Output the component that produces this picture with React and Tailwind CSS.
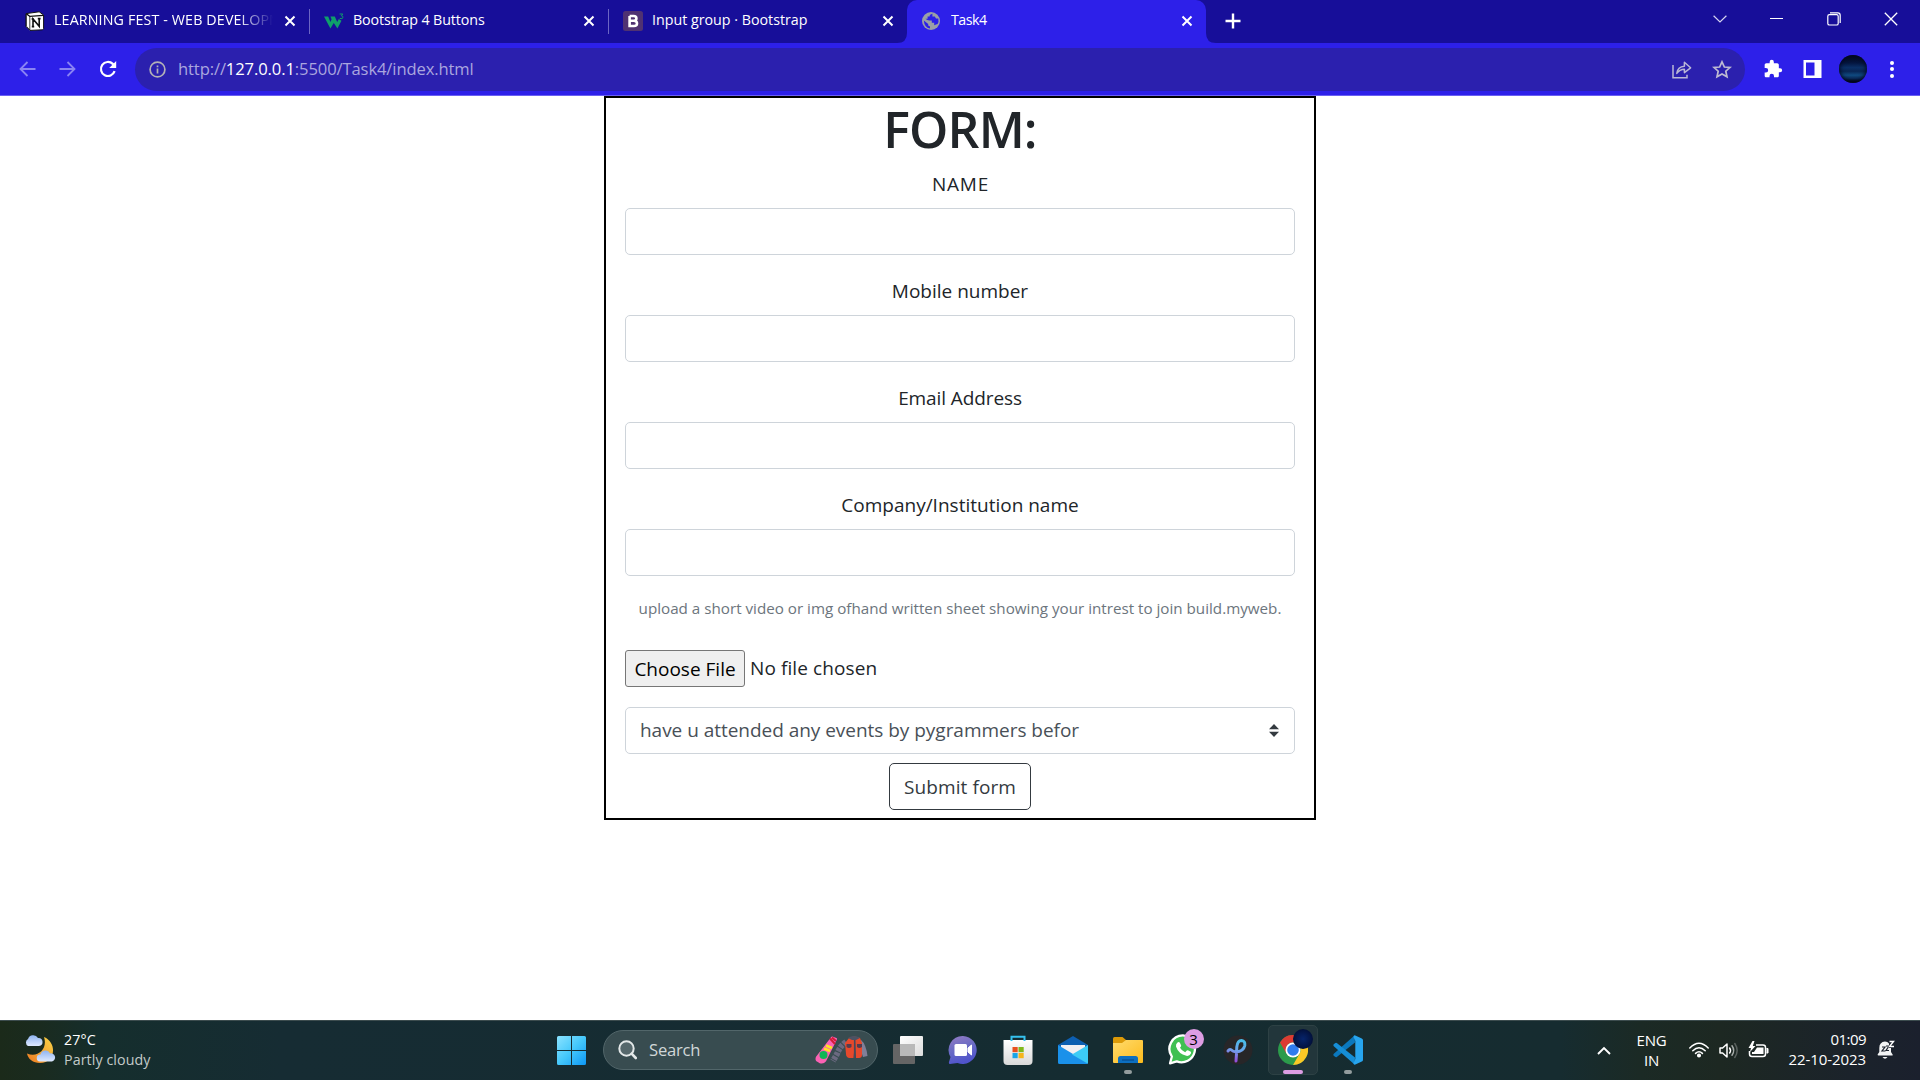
import React from "react";

const NotionIcon = () => (
  <svg width="20" height="20" viewBox="0 0 20 20">
    <path d="M1.2 2.6 L14.2 0.8 L18.6 4 V17.8 L17.6 18.8 L5 19.4 L1 15.4 V3.6 Z" fill="#fff" stroke="#111" strokeWidth="1" strokeLinejoin="round" />
    <path d="M1.4 2.8 L4.8 5.4 V19 L1.4 15.2 Z" fill="#fff" stroke="#111" strokeWidth=".8" />
    <path d="M1.4 2.8 L4.8 5.4 L18.4 4.4" fill="none" stroke="#111" strokeWidth="1.3" />
    <path d="M8 15.5 V8 L14.2 15.3 V7.4 M6.6 8 H9 M12.8 7.6 H15.6 M6.8 15.6 H9.2" fill="none" stroke="#111" strokeWidth="1.6" />
  </svg>
);

const W3Icon = () => (
  <svg width="20" height="20" viewBox="0 0 20 20">
    <path d="M0 5.5 H4.200 L6.400 11 L7.600 8.200 L6.400 5.500 H10.800 L13.200 11 L14.800 8 L17.500 9.800 L13.400 17.500 L9.800 12 L6.400 17.500 Z" fill="#0f9f6a" />
    <path d="M15.6 3 H18.8 L17.4 4.8 Q19.3 5 19 6.6 Q18.4 8.2 15.8 7.4" fill="none" stroke="#0f9f6a" strokeWidth="1" />
  </svg>
);

const BootstrapIcon = () => (
  <svg width="20" height="20" viewBox="0 0 20 20">
    <rect width="20" height="20" rx="2.5" fill="#4f3272" />
    <path d="M6.6 5 H10.6 Q13.4 5 13.4 7.4 Q13.4 9.6 10.8 9.8 H6.6 M6.6 9.8 H11 Q14 10 14 12.5 Q14 15 11 15 H6.6 V5" fill="none" stroke="#fff" strokeWidth="2.6" />
  </svg>
);

const GlobeIcon = () => (
  <svg width="20" height="20" viewBox="0 0 20 20">
    <circle cx="9" cy="10" r="9" fill="#9aa0a6" />
    <path d="M10.4 2.8 Q7.400 3.4 7.600 5.6 H5.600 V7.8 H3.400 Q5 9.4 7.600 9.6 H9.800 V11.8 H12.2 V14.2 Q14.2 13.6 15.6 13 Q17 10.8 16.3 7.4 L14 7.6 L12.8 5.6 H10.4 Z M1.800 9.4 L6.200 13 V14.6 L8 15.4 V17.4 Q2.400 16.6 1.800 9.4 Z" fill="#2c20e8" />
  </svg>
);

const TabClose = () => (
  <svg width="12" height="12" viewBox="0 0 12 12" className="shrink-0">
    <path d="M1.5 1.5 L10.5 10.5 M10.5 1.5 L1.5 10.5" stroke="#fff" strokeWidth="2" />
  </svg>
);

function Tab({ icon, children, active, spacing, divider }) {
  return (
    <div className={"relative flex h-[43px] w-[299px] shrink-0 items-center pl-[15px] pr-[13px] pb-[2px] " + (active ? "rounded-t-[10px] bg-[#2d20e9]" : "")}>
      {active && (
        <>
          <svg className="absolute bottom-0 -left-[10px]" width="10" height="10"><path d="M0 10 Q10 10 10 0 V10 Z" fill="#2d20e9" /></svg>
          <svg className="absolute bottom-0 -right-[10px]" width="10" height="10"><path d="M10 10 Q0 10 0 0 V10 Z" fill="#2d20e9" /></svg>
        </>
      )}
      <span className="mr-[9px] shrink-0">{icon}</span>
      <span className={"flex-1 overflow-hidden whitespace-nowrap pb-px text-[14.25px] leading-5 text-white " + spacing}>{children}</span>
      <TabClose />
      {divider && <span className="absolute right-[-1px] top-[9px] h-[25px] w-px bg-[#6c66c4]" />}
    </div>
  );
}

function TabStrip() {
  return (
    <div className="flex h-[43px] bg-[#170e99] pl-[10px]">
      <Tab icon={<NotionIcon />} divider spacing="tracking-[0.14px] mr-[11px] [mask-image:linear-gradient(90deg,#000_84%,transparent)]">LEARNING FEST - WEB DEVELOPMENT</Tab>
      <Tab icon={<W3Icon />} divider spacing="tracking-[-0.1px]">Bootstrap 4 Buttons</Tab>
      <Tab icon={<BootstrapIcon />} spacing="tracking-[0px]">Input group · Bootstrap</Tab>
      <Tab icon={<GlobeIcon />} active spacing="tracking-[-0.5px]">Task4</Tab>
      <div className="flex w-[53px] items-center justify-center pb-px">
        <svg width="16" height="16" viewBox="0 0 16 16"><path d="M8 .5 V15.5 M.5 8 H15.5" stroke="#fff" strokeWidth="2.4" /></svg>
      </div>
      <div className="ml-auto flex h-[37px]">
        <div className="flex w-[57px] items-center justify-center"><svg width="14" height="8" viewBox="0 0 14 8"><path d="M.6 .8 L7 7 L13.4 .8" fill="none" stroke="#d6d4f0" strokeWidth="1.2" /></svg></div>
        <div className="flex w-[57px] items-center justify-center"><span className="h-px w-[13px] bg-white" /></div>
        <div className="flex w-[57px] items-center justify-center">
          <svg width="14" height="14" viewBox="0 0 14 14" fill="none" stroke="#fff" strokeWidth="1.2"><rect x=".8" y="2.6" width="10.4" height="10.4" rx="1.6" /><path d="M3 .8 H10.8 Q13.2 .8 13.2 3.4 V11" /></svg>
        </div>
        <div className="flex w-[58px] items-center justify-center"><svg width="14" height="14" viewBox="0 0 14 14"><path d="M.8 .8 L13.2 13.2 M13.2 .8 L.8 13.2" stroke="#fff" strokeWidth="1.3" /></svg></div>
      </div>
    </div>
  );
}

function Toolbar() {
  return (
    <div className="flex h-[53px] items-center border-b border-[#6a60f2] bg-[#2d20e9] pl-[7px]">
      <div className="flex w-10 justify-center">
        <svg width="17" height="16" viewBox="0 0 17 16"><path d="M16.5 8 H1.5 M8.5 1 L1.5 8 L8.5 15" fill="none" stroke="#8a84f3" strokeWidth="1.8" /></svg>
      </div>
      <div className="flex w-10 justify-center">
        <svg width="17" height="16" viewBox="0 0 17 16"><path d="M.5 8 H15.5 M8.5 1 L15.5 8 L8.5 15" fill="none" stroke="#8a84f3" strokeWidth="1.8" /></svg>
      </div>
      <div className="flex w-[42px] justify-center">
        <svg width="18" height="18" viewBox="0 0 18 18"><path d="M15.6 11.2 A7 7 0 1 1 13.8 3.9 L15.6 5.8" fill="none" stroke="#fff" strokeWidth="2.2" /><path d="M17.2 1 V8 H10.2 Z" fill="#fff" /></svg>
      </div>
      <div className="ml-[6px] flex h-[43px] w-[1610px] items-center rounded-full bg-[#2b20ae] pl-[14px] pr-[13px]">
        <svg width="17" height="17" viewBox="0 0 17 17" fill="none" stroke="#b3b1b7" strokeWidth="1.7"><circle cx="8.5" cy="8.5" r="7.4" /><path d="M8.5 7.6 V12.6 M8.5 4.4 V6.2" /></svg>
        <span className="ml-[12px] text-[16.6px] leading-6 tracking-[-0.12px] text-[#aaa6df]">http://<span className="text-white">127.0.0.1</span>:5500/Task4/index.html</span>
        <svg className="ml-auto" width="20" height="19" viewBox="0 0 20 19" fill="none" stroke="#bab7d6" strokeWidth="1.5"><path d="M1 5 V17.8 H15 V14.8" /><path d="M4.8 13.4 Q5.6 6.6 12.4 6.2 V2.2 L18.6 7.8 L12.4 12.6 V9.2 Q7.6 9.4 4.8 13.4 Z" strokeLinejoin="round" /></svg>
        <svg className="ml-5" width="20" height="19" viewBox="0 0 20 19" fill="none" stroke="#bebbd2" strokeWidth="1.7"><path d="M10 1.8 L12.4 7 L18 7.5 L13.8 11.2 L15 16.8 L10 13.9 L5 16.8 L6.2 11.2 L2 7.5 L7.6 7 Z" /></svg>
      </div>
      <div className="ml-[18px] flex h-[43px] items-center">
        <svg width="20" height="20" viewBox="0 0 24 24" fill="#fff"><path d="M20.5 11H19V7c0-1.100-.9-2-2-2h-4V3.500a2.500 2.500 0 0 0-5 0V5H4c-1.100 0-2 .9-2 2v3.800h1.500a2.700 2.700 0 0 1 0 5.400H2V20c0 1.100.9 2 2 2h3.800v-1.500a2.700 2.700 0 0 1 5.400 0V22H17c1.100 0 2-.9 2-2v-4h1.500a2.500 2.500 0 0 0 0-5z" /></svg>
        <svg className="ml-5" width="19" height="18" viewBox="0 0 19 18"><path fillRule="evenodd" fill="#fff" d="M.5 0 H18.500 V18 H.5 Z M3 2.500 V15.500 H11.500 V2.500 Z" /></svg>
        <span className="ml-[17px] size-7 rounded-full bg-[linear-gradient(180deg,#020718_0%,#04153f_28%,#0a2f66_45%,#082554_58%,#104a80_72%,#0a2a58_84%,#010414_94%)] shadow-[inset_0_0_4px_1px_#020824]" />
        <span className="ml-[23px] flex w-[5px] flex-col gap-[2.5px]">
          <i className="size-1 rounded-full bg-white" /><i className="size-1 rounded-full bg-white" /><i className="size-1 rounded-full bg-white" />
        </span>
      </div>
    </div>
  );
}

function Field({ label, spacing }) {
  return (
    <div className="mb-5">
      <label className={"mb-[9px] block pt-px text-center leading-[30px] " + spacing}>{label}</label>
      <input className="block h-[47px] w-full rounded-[5px] border border-[#ced4da] bg-white px-4" />
    </div>
  );
}

function Form() {
  return (
    <div className="h-[924px] bg-white text-[19px] text-[#212529]">
      <form className="mx-auto h-[724px] w-[712px] border-2 border-black px-[19px]">
        <h1 className="mb-[10px] mt-0 pt-0.5 text-center text-[50px] font-semibold leading-[58px] tracking-[-0.87px]">FORM:</h1>
        <Field label="NAME" spacing="tracking-[0.8px] pl-px" />
        <Field label="Mobile number" spacing="tracking-[0px]" />
        <Field label="Email Address" spacing="tracking-[-0.1px]" />
        <Field label="Company/Institution name" spacing="tracking-[0px]" />
        <p className="whitespace-nowrap text-center text-[15.2px] leading-6 text-[#6c757d]">upload a short video or img ofhand written sheet showing your intrest to join build.myweb.</p>
        <div className="mt-[30px] flex h-[37px] items-center">
          <button type="button" className="h-[37px] w-[120px] whitespace-nowrap rounded-[3px] border border-[#767676] bg-[#efefef] text-[19px] leading-[30px] text-black">Choose File</button>
          <span className="ml-[5px] tracking-[0.1px]">No file chosen</span>
        </div>
        <div className="mt-5 flex h-[47px] items-center justify-between rounded-[5px] border border-[#ced4da] pl-[14px] pr-[15px] text-[#495057]">
          <span className="tracking-[-0.03px]">have u attended any events by pygrammers befor</span>
          <svg width="10" height="13" viewBox="0 0 4 5" preserveAspectRatio="none"><path fill="#343a40" d="M2 0L0 2h4zm0 5L0 3h4z" /></svg>
        </div>
        <button type="button" className="mx-auto mt-[9px] block h-[47px] w-[142px] whitespace-nowrap rounded-[5px] border border-[#343a40] text-[19px] leading-[30px] tracking-[0.1px] text-[#343a40]">Submit form</button>
      </form>
    </div>
  );
}

const WeatherIcon = () => (
  <svg width="32" height="32" viewBox="0 0 32 32">
    <defs>
      <linearGradient id="moon" x1="1" y1="0" x2="0" y2="1"><stop offset="0" stopColor="#f9d548" /><stop offset="1" stopColor="#ee7a22" /></linearGradient>
      <linearGradient id="cloud" x1="0" y1="0" x2="0" y2="1"><stop offset="0" stopColor="#8fb3f0" /><stop offset="1" stopColor="#dfeaff" /></linearGradient>
    </defs>
    <path d="M20 3 C34 9 31 29 16 29 C9 29 4 25 3 19.500 C14 24 24 15 20 3 Z" fill="url(#moon)" />
    <path d="M4 12 A4 4 0 0 1 4 5 A5.500 5.500 0 0 1 14 4 A4 4 0 0 1 15 12 Z" fill="url(#cloud)" />
    <path d="M16 27.500 A3.500 3.500 0 0 1 16.500 20.500 A5 5 0 0 1 26 19.500 A4 4 0 0 1 28 27.500 Z" fill="url(#cloud)" />
  </svg>
);

const StartIcon = () => (
  <svg width="29" height="29" viewBox="0 0 29 29">
    <defs><linearGradient id="win" x1="0" y1="0" x2="1" y2="1"><stop offset="0" stopColor="#8be3ff" /><stop offset=".5" stopColor="#45c8fb" /><stop offset="1" stopColor="#0d97f5" /></linearGradient></defs>
    <path fill="url(#win)" d="M1.500 0 H14 V14 H0 V1.500 Q0 0 1.500 0 Z M15 0 H27.500 Q29 0 29 1.500 V14 H15 Z M0 15 H14 V29 H1.500 Q0 29 0 27.500 Z M15 15 H29 V27.500 Q29 29 27.500 29 H15 Z" />
  </svg>
);

const SearchArt = () => (
  <svg width="54" height="30" viewBox="0 0 54 30">
    <path d="M17 2.500 L21 4 L10 26 Q8 28.500 4.500 27 L2 25.500 Q1 24 2 22 Z" fill="#fb62b4" stroke="#fb62b4" strokeWidth="2" strokeLinejoin="round" />
    <path d="M15 3.500 L20 9 M17 2.500 L21 6" stroke="#d41c38" strokeWidth="2" />
    <path d="M11 10.500 L17 13 M9 13.500 L15 16" stroke="#ffe51f" strokeWidth="2.500" />
    <circle cx="8.500" cy="20" r="4" fill="#0eb655" />
    <path d="M31 7 Q25 11 22 19 L18 26" fill="none" stroke="#6b6980" strokeWidth="6" strokeDasharray="3.500 1" />
    <path d="M46 5 Q51 9 52.500 21 L48 22 L44 9 Z" fill="#817f98" />
    <path d="M34 3 Q39 0 45 3 L47 8 V20 Q47 23 44 23 H41 L40 6 L38.500 23 H34 Q31 22 31 19 L30 8 Z" fill="#e6492c" />
    <path d="M33 3 Q39 -1 45 3 L41 5 H37 Z" fill="#4c5263" />
    <path d="M31.500 9 H36.500 V12 Q34 14 31.500 12 Z M42 9 H47 V12 Q44 14 42 12 Z" fill="#563b4d" />
    <path d="M39.700 5 V23" stroke="#48495b" strokeWidth="1.600" />
  </svg>
);

const TaskViewIcon = () => (
  <svg width="30" height="30" viewBox="0 0 30 30">
    <defs><linearGradient id="tv" x1="0" y1="0" x2="1" y2="1"><stop offset="0" stopColor="#fff" /><stop offset="1" stopColor="#dcdcdc" /></linearGradient></defs>
    <rect x="0" y="9" width="22" height="20" rx="1" fill="#656565" />
    <rect x="7" y="1" width="23" height="20" rx="1" fill="url(#tv)" />
    <rect x="7" y="9" width="15" height="12" fill="#b9b9b9" />
  </svg>
);

const ChatIcon = () => (
  <svg width="30" height="30" viewBox="0 0 30 30">
    <defs><linearGradient id="chat" x1="0" y1="0" x2=".3" y2="1"><stop offset="0" stopColor="#947cc4" /><stop offset=".5" stopColor="#6b6cc4" /><stop offset="1" stopColor="#5054cc" /></linearGradient></defs>
    <path d="M15 1 A14 14 0 1 1 9.500 28 L2 29 Q.5 29 1 27 L2.500 22 A14 14 0 0 1 15 1 Z" fill="url(#chat)" />
    <rect x="6.500" y="9" width="12.500" height="12" rx="1.500" fill="#fff" />
    <path d="M20 13 L23.500 10 V20 L20 17 Z" fill="#fff" stroke="#fff" strokeLinejoin="round" />
  </svg>
);

const StoreIcon = () => (
  <svg width="30" height="30" viewBox="0 0 30 30">
    <defs><linearGradient id="store" x1="0" y1="0" x2="0" y2="1"><stop offset="0" stopColor="#fff" /><stop offset="1" stopColor="#d9d9d9" /></linearGradient></defs>
    <path d="M.5 5 H29.500 V26 Q29.500 30 25.500 30 H4.500 Q.5 30 .5 26 Z" fill="url(#store)" />
    <path d="M8.500 6 V1.800 H21.500 V6" fill="none" stroke="#35c1ee" strokeWidth="2" />
    <rect x="9.500" y="12" width="5.200" height="5.200" fill="#e8501f" /><rect x="15.500" y="12" width="5.200" height="5.200" fill="#7fb81a" />
    <rect x="9.500" y="18" width="5.200" height="5.200" fill="#1aa5e8" /><rect x="15.500" y="18" width="5.200" height="5.200" fill="#f5b51a" />
  </svg>
);

const MailIcon = () => (
  <svg width="30" height="30" viewBox="0 0 30 30">
    <path d="M0 10 L15 1 L30 10 V20 H0 Z" fill="#0d5fb1" />
    <path d="M3 10 H27 V22 H3 Z" fill="#f1eff2" />
    <path d="M0 10 L15 19 L30 28 Q30 29 29 29 H1.500 Q0 29 0 27.500 Z" fill="#1a91ea" />
    <path d="M30 10 V27.500 Q30 28 29.500 28.500 L14 19.500 Z" fill="#3ccbf6" />
  </svg>
);

const FolderIcon = () => (
  <svg width="30" height="30" viewBox="0 0 30 30">
    <defs><linearGradient id="fold" x1="0" y1="0" x2="1" y2="1"><stop offset="0" stopColor="#ffdb6d" /><stop offset="1" stopColor="#fdbb1c" /></linearGradient></defs>
    <path d="M0 3.500 Q0 2 1.500 2 H9.500 L13 5 V9 H0 Z" fill="#dc9a08" />
    <path d="M0 8 H9 L13 5 H29 Q30 5 30 6 V27 Q30 28 29 28 H1 Q0 28 0 27 Z" fill="url(#fold)" />
    <path d="M5 28 V23.500 Q5 21 7.500 21 H22.500 Q25 21 25 23.500 V28 Z" fill="#0c6fc0" />
    <path d="M9 25 H21" stroke="#084a8b" strokeWidth="1.200" />
  </svg>
);

const WhatsAppIcon = () => (
  <svg width="30" height="32" viewBox="0 0 30 32">
    <path d="M15 1.500 A14 14 0 1 1 8.500 28.500 L1.500 30.500 L3.400 23.500 A14 14 0 0 1 15 1.500 Z" fill="#3fc052" stroke="#fff" strokeWidth="2.400" strokeLinejoin="round" transform="translate(.6 0) scale(.96)" />
    <path d="M9.500 8.500 Q11 7.500 12 9 L13.200 11.600 Q13.300 12.500 12 13.800 Q13.800 17 17.200 18.300 L18.800 16.500 Q19.500 16 20.400 16.500 L22.800 17.800 Q23.400 18.300 22.800 19.800 Q21.500 22.300 18.300 21.800 Q10.500 20 8 12.500 Q7.600 10 9.500 8.500 Z" fill="#fff" />
  </svg>
);

const PyIcon = () => (
  <svg width="30" height="30" viewBox="0 0 30 30">
    <defs><linearGradient id="py" gradientUnits="userSpaceOnUse" x1="18" y1="5" x2="12" y2="27"><stop offset="0" stopColor="#47bde8" /><stop offset=".5" stopColor="#6fa0ea" /><stop offset="1" stopColor="#9747d8" /></linearGradient></defs>
    <circle cx="15" cy="15" r="14.500" fill="#272628" />
    <path d="M13 26 Q13.500 20 13.800 12 Q14.500 5.500 18.500 5.500 Q22.500 6 21.800 10.500 Q20.500 16.500 13 17 Q10 16.800 8 14.800 Q6.500 14 5 16" fill="none" stroke="url(#py)" strokeWidth="3" strokeLinecap="round" />
  </svg>
);

const ChromeIcon = () => (
  <svg width="30" height="30" viewBox="0 0 30 30">
    <circle cx="15" cy="15" r="15" fill="#2c9b4b" />
    <path d="M2 7.500 A15 15 0 0 1 28 7.500 H15 A7.500 7.500 0 0 0 8.500 11.500 L8.500 18.750 Z" fill="#dc3b32" />
    <path d="M28 7.500 A15 15 0 0 1 15 30 L21.500 18.750 A7.500 7.500 0 0 0 15 7.500 Z" fill="#fbc926" />
    <circle cx="15" cy="15" r="7.500" fill="#fff" /><circle cx="15" cy="15" r="5.800" fill="#2f7cee" />
  </svg>
);

const CodeIcon = () => (
  <svg width="30" height="30" viewBox="0 0 30 30">
    <path d="M22 7.500 L3.800 22 Q2.800 22.500 2 21.800 L.5 20.500 Q0 19.600 .8 18.800 L21.500 .4 Z" fill="#0b78bd" />
    <path d="M22 22.500 L3.800 8 Q2.800 7.500 2 8.200 L.5 9.500 Q0 10.400 .8 11.200 L21.500 29.600 Z" fill="#168ed6" />
    <path d="M21.800 .2 L28.800 3.400 Q30 4 30 5.300 V24.700 Q30 26 28.800 26.600 L21.800 29.800 Q20.500 29.800 20.500 28 L22.300 24 V6 L20.500 2 Q20.500 .2 21.800 .2 Z" fill="#27a5ee" />
  </svg>
);

function TaskItem({ children, running, active }) {
  return (
    <div className="flex w-[55px] shrink-0 justify-center">
      <div className={"relative flex h-[50px] w-[50px] items-center justify-center " + (active ? "rounded-[5px] border border-[#2d4144] bg-[#22363b]" : "")}>
        {children}
        {running && <span className="absolute bottom-px h-1 w-2 rounded-full bg-[#939d9e]" />}
        {active && <span className="absolute bottom-0 h-1 w-5 rounded-full bg-[#dd9de3]" />}
      </div>
    </div>
  );
}

function Taskbar() {
  return (
    <div className="flex h-[60px] items-center border-t border-[#3c4c4e] pb-px bg-[linear-gradient(90deg,#1b2a1a_0px,#1a2b1f_40px,#152e2d_100px,#162c33_280px,#152c31_1100px,#162c30_1560px,#1b2a25_1640px,#1d2822_1720px,#1b232b_1850px,#1b202d_1920px)]">
      <div className="flex w-[532px] items-center pb-px pl-6">
        <WeatherIcon />
        <div className="ml-2 whitespace-nowrap text-[14.25px] leading-5">
          <div className="tracking-[0.1px] text-white">27°C</div>
          <div className="tracking-[0.08px] text-[#c3cac9]">Partly cloudy</div>
        </div>
      </div>
      <div className="flex w-[71px] justify-center pl-[8px]"><StartIcon /></div>
      <div className="flex h-10 w-[275px] items-center rounded-full border border-[#52666a] bg-[#384c50] pl-[14px] pr-[8px]">
        <svg width="19" height="20" viewBox="0 0 19 20" fill="none" stroke="#e3e8e8"><circle cx="8.500" cy="8.500" r="7.200" strokeWidth="2" fill="#56686c" /><path d="M13.600 13.600 L17.800 18" strokeWidth="2.600" strokeLinecap="round" /></svg>
        <span className="ml-[12px] text-[16.6px] tracking-[-0.2px] text-[#d1d7d8]">Search</span>
        <span className="ml-auto"><SearchArt /></span>
      </div>
      <div className="ml-[2px] flex">
        <TaskItem><TaskViewIcon /></TaskItem>
        <TaskItem><ChatIcon /></TaskItem>
        <TaskItem><StoreIcon /></TaskItem>
        <TaskItem><MailIcon /></TaskItem>
        <TaskItem running><FolderIcon /></TaskItem>
        <TaskItem>
          <WhatsAppIcon />
          <span className="absolute left-[26px] top-[4px] flex size-5 items-center justify-center rounded-full bg-[#dd9de3] text-[15px] leading-5 text-black">3</span>
        </TaskItem>
        <TaskItem><PyIcon /></TaskItem>
        <TaskItem active>
          <ChromeIcon />
          <span className="absolute left-6 top-[3px] size-5 rounded-full bg-[radial-gradient(ellipse_at_50%_50%,#06246b_0%,#031546_55%,#010720_100%)]" />
        </TaskItem>
        <TaskItem running><CodeIcon /></TaskItem>
      </div>
      <div className="ml-auto flex items-center whitespace-nowrap pr-[25px] text-[15px] leading-5 text-white">
        <svg width="14" height="9" viewBox="0 0 14 9"><path d="M1 8 L7 2 L13 8" fill="none" stroke="#fff" strokeWidth="1.900" /></svg>
        <div className="ml-[26px] w-[30px] text-center tracking-[-0.16px]"><div>ENG</div><div>IN</div></div>
        <svg className="ml-[22px]" width="20" height="16" viewBox="0 0 20 16" fill="none" stroke="#fff" strokeWidth="1.500" strokeLinecap="round"><path d="M.8 6 Q10 -3.500 19.200 6 M3.800 8.800 Q10 2.500 16.200 8.800 M6.600 11.400 Q10 8 13.400 11.400" /><circle cx="10" cy="13.500" r="1.300" fill="#fff" /></svg>
        <svg className="ml-[10px]" width="20" height="17" viewBox="0 0 20 17" fill="none" stroke="#fff" strokeWidth="1.500" strokeLinecap="round"><path d="M1 6 H3.600 L8 2 V15 L3.600 11 H1 Z" strokeLinejoin="round" /><path d="M10.600 6 Q12.400 8.500 10.600 11" /><path d="M13 3.800 Q16.400 8.500 13 13.200" stroke="#a5aba8" /><path d="M15.800 1.500 Q20.500 8.500 15.800 15.500" stroke="#59615e" /></svg>
        <svg className="ml-[9px]" width="21" height="18" viewBox="0 0 21 18"><path d="M8 4 H15 Q17.500 4 17.500 6.500 V13 Q17.500 15.500 15 15.500 H4 Q1.500 15.500 1.500 13 V10" fill="none" stroke="#fff" strokeWidth="1.500" /><path d="M18.500 7.500 H20 V12 H18.500" fill="#fff" stroke="#fff" /><path d="M9 6.500 H15.500 V13 H4 V11 H6 Z" fill="#fff" /><path d="M4.500 0 L.5 7 H3 L2 11 L7.500 5 H4.800 L6.500 0 Z" fill="#fff" /></svg>
        <div className="ml-[20px] pb-[2px] text-right"><div className="tracking-[-0.57px]">01:09</div><div className="tracking-[-0.08px]">22-10-2023</div></div>
        <svg className="ml-[11px]" width="18" height="20" viewBox="0 0 18 20"><path d="M8 1.500 Q2.300 2 2.300 8 V12 L.6 14.500 Q.6 15.500 1.500 15.500 H15 Q16 15.500 15.600 14.500 L14 12 V8 Q13 2 8 1.500 Z M5.500 17 H10.500 Q8 20.500 5.500 17 Z" fill="#f3f4f5" /><path d="M12 0 H18 V8 H12 Z" fill="#1b212c" /><path d="M5 7 H8 L5 11 H8.500 M9 6 H12 L9 10.500 H12" stroke="#1b212c" strokeWidth="1.200" fill="none" /><path d="M12.500 1.500 H16.500 L12.500 6.500 H17" stroke="#fff" strokeWidth="1.400" fill="none" /></svg>
      </div>
    </div>
  );
}

export default function App() {
  return (
    <div className="h-[1080px] w-[1920px] overflow-hidden bg-white font-['Open_Sans','Noto_Sans',sans-serif]">
      <TabStrip />
      <Toolbar />
      <Form />
      <Taskbar />
    </div>
  );
}
